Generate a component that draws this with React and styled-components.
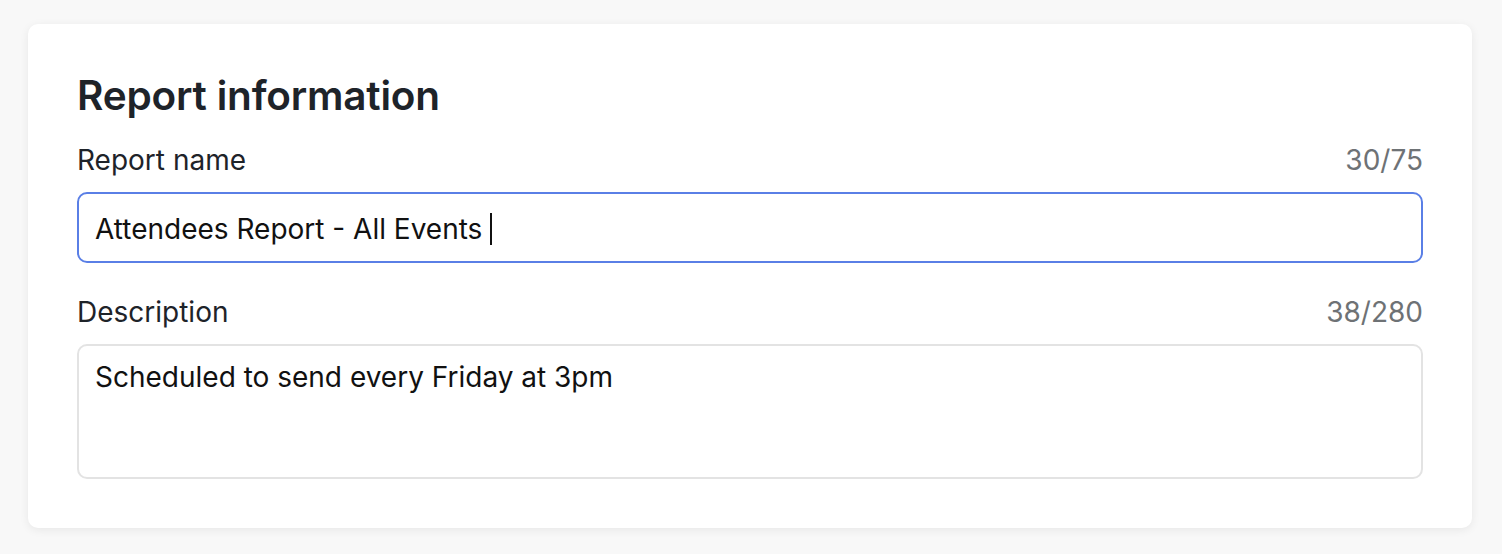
import React, { useState } from 'react'
import styled, { createGlobalStyle } from 'styled-components'

const GlobalStyle = createGlobalStyle`
	html, body {
		margin: 0;
		padding: 0;
		background: #f8f8f8;
		font-family: Inter, 'Noto Sans', sans-serif;
		-webkit-font-smoothing: antialiased;
	}
`

export default function App() {
	const [name, setName] = useState('Attendees Report - All Events ')
	const [description, setDescription] = useState('Scheduled to send every Friday at 3pm')

	return (
		<Page>
			<GlobalStyle />
			<Card>
				<Title>Report information</Title>
				<Field>
					<LabelRow>
						<Label htmlFor="report-name">Report name</Label>
						<Counter>{name.length}/75</Counter>
					</LabelRow>
					<InputWrap>
						<TextInput
							id="report-name"
							value={name}
							maxLength={75}
							onChange={e => setName(e.target.value)}
							$focused
						/>
						{/* static caret so the focused state shows in a still picture */}
						<Caret>
							<Ghost>{name}</Ghost>
							<CaretBar />
						</Caret>
					</InputWrap>
				</Field>
				<Field>
					<LabelRow>
						<Label htmlFor="report-description">Description</Label>
						<Counter>{description.length + 1}/280</Counter>
					</LabelRow>
					<TextArea
						id="report-description"
						value={description}
						maxLength={280}
						onChange={e => setDescription(e.target.value)}
					/>
				</Field>
			</Card>
		</Page>
	)
}

const Page = styled.div`
	padding: 24px 30px 26px 28px;
`

const Card = styled.section`
	background: #fff;
	border-radius: 10px;
	box-shadow: 0 2px 10px rgba(0, 0, 0, 0.07);
	padding: 48px 49px 49px 49px;
	display: flex;
	flex-direction: column;
`

const Title = styled.h2`
	margin: 0 0 23px;
	font-size: 40.5px;
	line-height: 48px;
	font-weight: 600;
	color: #1e2329;
	letter-spacing: -0.2px;
`

const Field = styled.div`
	display: flex;
	flex-direction: column;
	& + & {
		margin-top: 32px;
	}
`

const LabelRow = styled.div`
	display: flex;
	justify-content: space-between;
	align-items: baseline;
	margin-bottom: 15px;
`

const Label = styled.label`
	font-size: 28px;
	line-height: 34px;
	color: #1e2329;
`

const Counter = styled.span`
	font-size: 28px;
	line-height: 34px;
	color: #6e7275;
`

const fieldBase = `
	box-sizing: border-box;
	width: 100%;
	margin: 0;
	border-radius: 10px;
	background: #fff;
	font-family: Inter, 'Noto Sans', sans-serif;
	font-size: 28px;
	color: #111;
	outline: none;
	padding: 0 16px;
`

const InputWrap = styled.div`
	position: relative;
`

const TextInput = styled.input`
	${fieldBase}
	display: block;
	height: 71px;
	padding-top: 2px;
	border: 2px solid ${props => (props.$focused ? '#5a7fe6' : '#e3e3e3')};
	caret-color: transparent;
`

const Caret = styled.div`
	position: absolute;
	left: 18px;
	top: 2px;
	bottom: 0;
	display: flex;
	align-items: center;
	pointer-events: none;
	font-size: 28px;
	white-space: pre;
`

const Ghost = styled.span`
	visibility: hidden;
`

const CaretBar = styled.span`
	width: 2px;
	height: 32px;
	background: #111;
`

const TextArea = styled.textarea`
	${fieldBase}
	display: block;
	height: 135px;
	padding-top: 14px;
	border: 2px solid #e3e3e3;
	resize: none;
	line-height: 34px;
`
